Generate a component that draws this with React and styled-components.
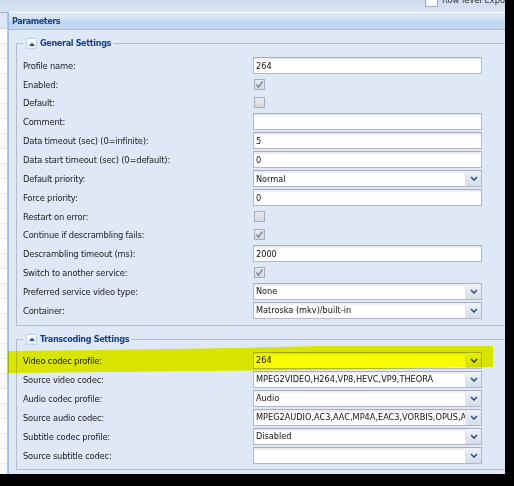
import React from "react";
import styled, { createGlobalStyle } from "styled-components";

const GlobalStyle = createGlobalStyle`
  html, body {
    margin: 0;
    padding: 0;
    background: #000;
  }
  body {
    font-family: "DejaVu Sans Condensed", "DejaVu Sans", sans-serif;
    font-stretch: condensed;
    font-size: 9.3px;
    color: #111;
  }
`;

const Screen = styled.div`
  position: relative;
  width: 514px;
  height: 486px;
  background: #000;
  overflow: hidden;
`;

const Window = styled.div`
  width: 505px;
  height: 474px;
  overflow: hidden;
  display: flex;
  flex-direction: column;
  background: #d5e1f1;
`;

const TopBar = styled.div`
  height: 12px;
  flex: none;
  display: flex;
  align-items: flex-start;
  gap: 4px;
  padding-left: 425px;
  overflow: hidden;
  background: linear-gradient(#d0ddef, #d9e4f3);
`;

const TopCheck = styled.span`
  width: 11px;
  height: 11px;
  margin-top: -6px;
  border: 1px solid #a3a9b3;
  background: #fff;
  flex: none;
`;

const TopText = styled.span`
  margin-top: -6px;
  line-height: 11px;
  color: #333;
  white-space: nowrap;
`;

const Main = styled.div`
  display: flex;
  flex: 1;
  min-height: 0;
`;

const LeftGrid = styled.div`
  width: 7px;
  flex: none;
  background: #fff;
  border-right: 1px solid #b7c7db;
  border-top: 1px solid #9fb3cb;
`;

const GridHeader = styled.div`
  height: 15px;
  background: #dce6f4;
  border-bottom: 1px solid #c3d0e1;
`;

const GridRow = styled.div`
  height: 15px;
  box-sizing: border-box;
  border-bottom: 1px solid #e6e9ee;
  background: ${(p) => (p.alt ? "#fafafa" : "#fff")};
`;

const Panel = styled.div`
  width: 560px;
  flex: none;
  display: flex;
  flex-direction: column;
  border-left: 1px solid #99bbe8;
  background: #dfe8f6;
`;

const PanelHeader = styled.div`
  height: 16px;
  line-height: 16px;
  padding-left: 3px;
  border-top: 1px solid #f4f8fd;
  border-bottom: 1px solid #99bbe8;
  background: linear-gradient(#dce7f5 0%, #d3e1f3 45%, #c1d5ee 55%, #c4d7ef 100%);
  color: #15428b;
  font-size: 9px;
  letter-spacing: -0.45px;
  font-weight: bold;
`;

const PanelBody = styled.div`
  padding: 8px 0 0 7px;
`;

const FieldSet = styled.fieldset`
  width: 520px;
  margin: ${(p) => (p.first ? "0" : "8px 0 0")};
  padding: ${(p) => (p.first ? "8px 0 4px 6px" : "7px 0 3px 6px")};
  border: 1px solid #b5bccb;
  box-sizing: border-box;
`;

const Legend = styled.legend`
  display: flex;
  align-items: center;
  gap: 3px;
  height: 11px;
  padding: 0 3px;
  color: #15428b;
  font-size: 9px;
  letter-spacing: -0.35px;
  font-weight: bold;
  line-height: 11px;
`;

const Toggle = styled.span`
  width: 9px;
  height: 9px;
  display: flex;
  align-items: center;
  justify-content: center;
  border: 1px solid #c3d3ea;
  background: linear-gradient(#ffffff, #e4edf9);
  flex: none;
`;

const Row = styled.div`
  display: flex;
  align-items: center;
  height: ${(p) => (p.check ? "16.5px" : "17px")};
  margin-bottom: 2px;
`;

const Label = styled.div`
  width: 230px;
  flex: none;
  white-space: nowrap;
  font-size: 9.3px;
  letter-spacing: -0.2px;
  color: #1a1a1a;
`;

const TextBox = styled.div`
  width: 229px;
  height: 17px;
  box-sizing: border-box;
  display: flex;
  align-items: center;
  border: 1px solid #b5b8c8;
  border-top-color: #a8aec0;
  background: #fff linear-gradient(#e6e6e6, #fff 3px);
  color: #111;
  font-size: 9.1px;
  overflow: hidden;
`;

const BoxText = styled.span`
  flex: 1;
  min-width: 0;
  padding-left: 2px;
  white-space: nowrap;
  overflow: hidden;
`;

const Trigger = styled.span`
  width: 15px;
  height: 100%;
  flex: none;
  display: flex;
  align-items: center;
  justify-content: center;
  background: linear-gradient(#eef2f8, #d5dde8);
  border-left: 1px solid #e0e5ec;
`;

const CheckBox = styled.span`
  width: 11px;
  height: 11px;
  margin-left: 1px;
  box-sizing: border-box;
  display: flex;
  align-items: center;
  justify-content: center;
  border: 1px solid #a9adb4;
  background: linear-gradient(#e9eaec, #d6d8dc);
`;

const Highlight = styled.div`
  position: absolute;
  left: 8px;
  top: 345px;
  width: 486px;
  height: 29px;
  background: #f8fc00;
  mix-blend-mode: multiply;
  clip-path: polygon(
    0 6px,
    90px 5px,
    230px 3px,
    312px 1px,
    485px 1px,
    485px 22px,
    300px 25px,
    100px 27px,
    0 28px
  );
`;

function Chevron() {
  return (
    <svg width="8" height="5" viewBox="0 0 8 5">
      <path d="M1 1 L4 4 L7 1" fill="none" stroke="#2b4f8d" strokeWidth="1.6" />
    </svg>
  );
}

function Tick() {
  return (
    <svg width="9" height="9" viewBox="0 0 9 9">
      <path d="M1.5 4.5 L3.5 7 L7.5 1.5" fill="none" stroke="#6f87b3" strokeWidth="1.4" />
    </svg>
  );
}

function UpArrow() {
  return (
    <svg width="6" height="4" viewBox="0 0 6 4">
      <path d="M0 4 L3 0.5 L6 4 Z" fill="#2e4f8d" />
    </svg>
  );
}

function Field({ item }) {
  if (item.type === "check") {
    return <CheckBox>{item.checked && <Tick />}</CheckBox>;
  }
  return (
    <TextBox>
      <BoxText>{item.value}</BoxText>
      {item.type === "combo" && (
        <Trigger>
          <Chevron />
        </Trigger>
      )}
    </TextBox>
  );
}

const general = [
  { label: "Profile name:", type: "text", value: "264" },
  { label: "Enabled:", type: "check", checked: true },
  { label: "Default:", type: "check" },
  { label: "Comment:", type: "text", value: "" },
  { label: "Data timeout (sec) (0=infinite):", type: "text", value: "5" },
  { label: "Data start timeout (sec) (0=default):", type: "text", value: "0" },
  { label: "Default priority:", type: "combo", value: "Normal" },
  { label: "Force priority:", type: "text", value: "0" },
  { label: "Restart on error:", type: "check" },
  { label: "Continue if descrambling fails:", type: "check", checked: true },
  { label: "Descrambling timeout (ms):", type: "text", value: "2000" },
  { label: "Switch to another service:", type: "check", checked: true },
  { label: "Preferred service video type:", type: "combo", value: "None" },
  { label: "Container:", type: "combo", value: "Matroska (mkv)/built-in" },
];

const transcoding = [
  { label: "Video codec profile:", type: "combo", value: "264" },
  {
    label: "Source video codec:",
    type: "combo",
    value: "MPEG2VIDEO,H264,VP8,HEVC,VP9,THEORA",
  },
  { label: "Audio codec profile:", type: "combo", value: "Audio" },
  {
    label: "Source audio codec:",
    type: "combo",
    value: "MPEG2AUDIO,AC3,AAC,MP4A,EAC3,VORBIS,OPUS,AAC-LATM",
  },
  { label: "Subtitle codec profile:", type: "combo", value: "Disabled" },
  { label: "Source subtitle codec:", type: "combo", value: "" },
];

function Section({ title, items, first }) {
  return (
    <FieldSet first={first}>
      <Legend>
        <Toggle>
          <UpArrow />
        </Toggle>
        {title}
      </Legend>
      {items.map((item) => (
        <Row key={item.label} check={item.type === "check"}>
          <Label>{item.label}</Label>
          <Field item={item} />
        </Row>
      ))}
    </FieldSet>
  );
}

export default function App() {
  const gridRows = Array.from({ length: 30 }, (_, i) => i);
  return (
    <Screen>
      <GlobalStyle />
      <Window>
        <TopBar>
          <TopCheck />
          <TopText>Row level Export</TopText>
        </TopBar>
        <Main>
          <LeftGrid>
            <GridHeader />
            {gridRows.map((i) => (
              <GridRow key={i} alt={i % 2 === 1} />
            ))}
          </LeftGrid>
          <Panel>
            <PanelHeader>Parameters</PanelHeader>
            <PanelBody>
              <Section title="General Settings" items={general} first />
              <Section title="Transcoding Settings" items={transcoding} />
            </PanelBody>
          </Panel>
        </Main>
      </Window>
      <Highlight />
    </Screen>
  );
}
